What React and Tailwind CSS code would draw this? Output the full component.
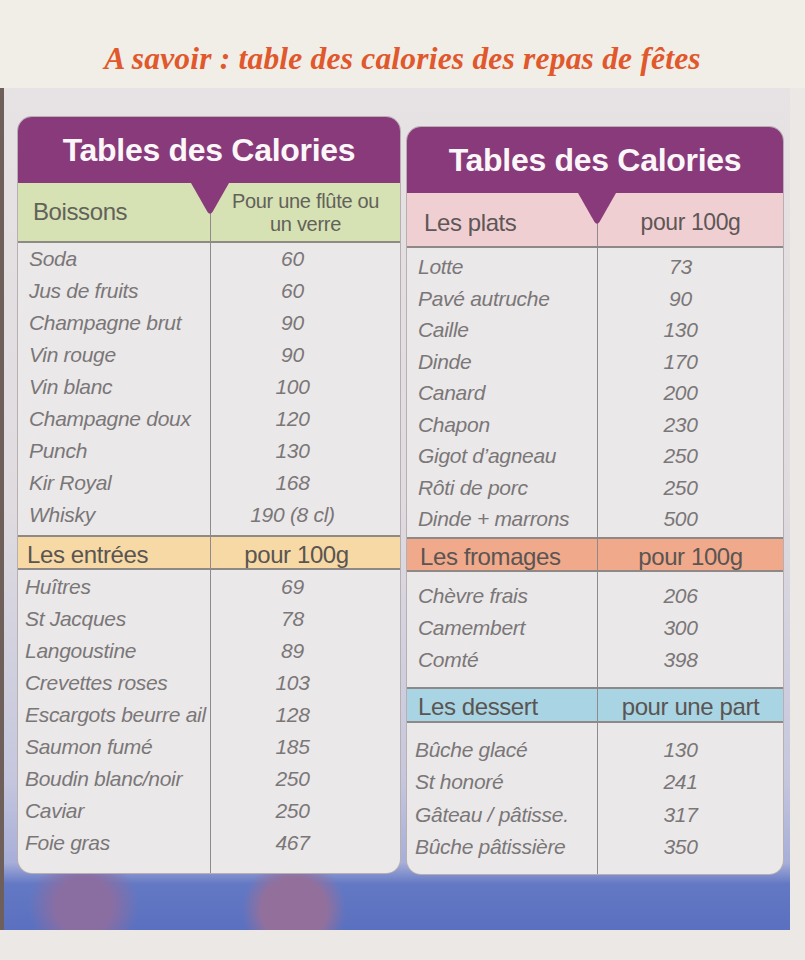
import React from "react";

const boissons = [
  ["Soda", "60"],
  ["Jus de fruits", "60"],
  ["Champagne brut", "90"],
  ["Vin rouge", "90"],
  ["Vin blanc", "100"],
  ["Champagne doux", "120"],
  ["Punch", "130"],
  ["Kir Royal", "168"],
  ["Whisky", "190 (8 cl)"],
];

const entrees = [
  ["Huîtres", "69"],
  ["St Jacques", "78"],
  ["Langoustine", "89"],
  ["Crevettes roses", "103"],
  ["Escargots beurre ail", "128"],
  ["Saumon fumé", "185"],
  ["Boudin blanc/noir", "250"],
  ["Caviar", "250"],
  ["Foie gras", "467"],
];

const plats = [
  ["Lotte", "73"],
  ["Pavé autruche", "90"],
  ["Caille", "130"],
  ["Dinde", "170"],
  ["Canard", "200"],
  ["Chapon", "230"],
  ["Gigot d’agneau", "250"],
  ["Rôti de porc", "250"],
  ["Dinde + marrons", "500"],
];

const fromages = [
  ["Chèvre frais", "206"],
  ["Camembert", "300"],
  ["Comté", "398"],
];

const desserts = [
  ["Bûche glacé", "130"],
  ["St honoré", "241"],
  ["Gâteau / pâtisse.", "317"],
  ["Bûche pâtissière", "350"],
];

// petite flèche violette sous le bandeau titre
function Notch({ className }) {
  return (
    <svg className={className} width="38" height="32" viewBox="0 0 38 32">
      <path d="M0 0 H38 L21.5 29 Q19 32.5 16.5 29 Z" fill="#883a7a" />
    </svg>
  );
}

function Body({ rows, cols, pad, row, namePad, valPad }) {
  return (
    <div className={`grid ${cols} italic text-[21px] tracking-[-0.3px] text-[#7a7778]`}>
      <div className={pad}>
        {rows.map(([n]) => (
          <div key={n} className={`${row} flex items-center whitespace-nowrap ${namePad}`}>
            {n}
          </div>
        ))}
      </div>
      <div className={`${pad} border-l border-[#8f8b8c]`}>
        {rows.map(([n, v]) => (
          <div key={n} className={`${row} flex items-center justify-center whitespace-nowrap ${valPad}`}>
            {v}
          </div>
        ))}
      </div>
    </div>
  );
}

function Band({ label, unit, cols, bg, h, labelPad, unitPad }) {
  return (
    <div className={`grid ${cols} ${h} ${bg} border-y-2 border-[#8e8986] text-[24px] tracking-[-0.4px] text-[#5a5552]`}>
      <div className={`flex items-center ${labelPad}`}>{label}</div>
      <div className={`flex items-center justify-center border-l border-[#8f8b8c] ${unitPad}`}>{unit}</div>
    </div>
  );
}

function Header() {
  return (
    <div className="h-[66px] bg-[#883a7a] flex items-center justify-center text-[#fbf6f8] font-bold text-[32px] tracking-[-0.3px]">
      Tables des Calories
    </div>
  );
}

export default function App() {
  return (
    <div className="w-[805px] h-[960px] overflow-hidden bg-[#ebe8e5] font-['Liberation_Sans',Arial,sans-serif]">
      <div className="h-[88px] bg-[#f1ede7] flex items-end justify-center pb-[6px]">
        <h1 className="font-['Liberation_Serif',serif] italic font-bold text-[31.5px] text-[#e0582b] tracking-[0.2px]">
          A savoir : table des calories des repas de fêtes
        </h1>
      </div>

      <div className="w-[790px] h-[842px] border-l-[4px] border-[#6f5f5b] bg-[radial-gradient(circle_at_290px_822px,#93709c_0,#93709c_32px,transparent_52px),radial-gradient(circle_at_80px_818px,#8a6ea2_0,#8a6ea2_28px,transparent_55px),linear-gradient(180deg,#e7e2e3_0%,#dfdbdf_50%,#c6c7de_82%,#a7aed8_92%,#6479c4_94.5%,#5a70c0_100%)]">
        <div className="flex items-start gap-[7px] pl-[14px] pt-[29px]">
          {/* tableau de gauche */}
          <div className="w-[382px] rounded-[14px] overflow-hidden bg-[#ebe8e9] ring-1 ring-[#b7afb1]">
            <Header />
            <div className="relative grid grid-cols-[192px_1fr] h-[60px] bg-[#d6e1b4] border-b-2 border-[#8e8b84]">
              <div className="flex items-center pl-[15px] text-[24px] tracking-[-0.4px] text-[#62625a]">Boissons</div>
              <div className="flex items-center justify-center text-center border-l border-[#8f8b8c] pt-[2px] text-[20px] leading-[23px] tracking-[-0.3px] text-[#62625a]">
                Pour une flûte ou
                <br />
                un verre
              </div>
              <Notch className="absolute left-[173px] top-0" />
            </div>
            <Body rows={boissons} cols="grid-cols-[192px_1fr]" pad="pb-[4px]" row="h-[32px]" namePad="pl-[11px]" valPad="pr-[26px]" />
            <Band label="Les entrées" unit="pour 100g" cols="grid-cols-[192px_1fr]" bg="bg-[#f6d9a4]" h="h-[35px]" labelPad="pl-[9px]" unitPad="pr-[18px]" />
            <Body rows={entrees} cols="grid-cols-[192px_1fr]" pad="pt-[1px] pb-[14px]" row="h-[32px]" namePad="pl-[7px]" valPad="pr-[26px]" />
          </div>

          {/* tableau de droite */}
          <div className="w-[376px] mt-[10px] rounded-[14px] overflow-hidden bg-[#ebe8e9] ring-1 ring-[#b7afb1]">
            <Header />
            <div className="relative grid grid-cols-[190px_1fr] h-[55px] bg-[#efcfd2] border-b-2 border-[#8e8986]">
              <div className="flex items-center pl-[17px] pt-[6px] text-[24px] tracking-[-0.4px] text-[#5f5657]">Les plats</div>
              <div className="flex items-center justify-center border-l border-[#8f8b8c] pt-[6px] text-[23px] tracking-[-0.4px] text-[#5f5657]">
                pour 100g
              </div>
              <Notch className="absolute left-[171px] top-0" />
            </div>
            <Body rows={plats} cols="grid-cols-[190px_1fr]" pad="pt-[3px] pb-[2.5px]" row="h-[31.5px]" namePad="pl-[11px]" valPad="pr-[20px]" />
            <Band label="Les fromages" unit="pour 100g" cols="grid-cols-[190px_1fr]" bg="bg-[#f0a98b]" h="h-[35px]" labelPad="pl-[13px]" unitPad="" />
            <Body rows={fromages} cols="grid-cols-[190px_1fr]" pad="pt-[8px] pb-[11px]" row="h-[32px]" namePad="pl-[11px]" valPad="pr-[20px]" />
            <Band label="Les dessert" unit="pour une part" cols="grid-cols-[190px_1fr]" bg="bg-[#a9d4e3]" h="h-[36px]" labelPad="pl-[11px]" unitPad="" />
            <Body rows={desserts} cols="grid-cols-[190px_1fr]" pad="pt-[10px] pb-[11px]" row="h-[32.5px]" namePad="pl-[8px]" valPad="pr-[20px]" />
          </div>
        </div>
      </div>
    </div>
  );
}
